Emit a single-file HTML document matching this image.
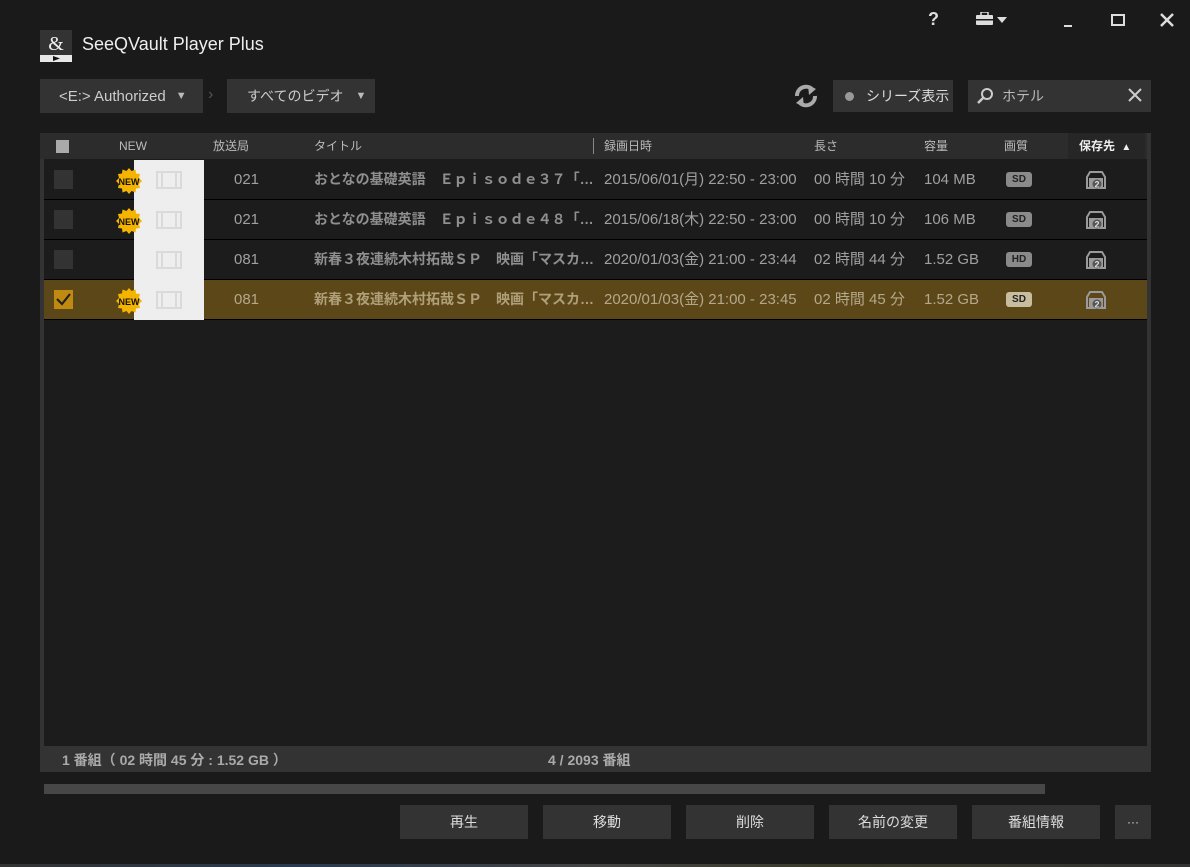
<!DOCTYPE html>
<html><head><meta charset="utf-8">
<style>
*{margin:0;padding:0;box-sizing:border-box}
body{width:1190px;height:867px;background:#1a1a1a;position:relative;overflow:hidden;font-family:"Liberation Sans","Noto Sans CJK JP",sans-serif;color:#ccc}
.abs{position:absolute}
.btn{position:absolute;background:#333;color:#ddd;font-size:14px;display:flex;align-items:center;justify-content:center}
.hdr{position:absolute;top:133px;height:26px;font-size:12px;color:#bbb;line-height:26px}
.row{position:absolute;left:44px;width:1103px;height:40px;background:#1c1c1c;border-bottom:1px solid #000}
.row .c{position:absolute;top:0;line-height:39px;font-size:15px;color:#a0a0a0;white-space:nowrap}
.cb{position:absolute;left:10px;top:10px;width:19px;height:19px;background:#333}
.new{position:absolute;left:73px;top:8px;width:26px;height:26px}
.thumb{position:absolute;left:90px;top:0;width:70px;height:40px;background:#eeeeee}
.q{position:absolute;left:962px;top:12px;width:26px;height:15px;border-radius:3px;background:#8a8a8a;color:#222;font-size:10px;font-weight:bold;text-align:center;line-height:15px}
.t{font-weight:bold;color:#8f8f8f!important;font-size:14px!important;width:280px;overflow:hidden;text-overflow:ellipsis}
</style></head><body>
<div class="abs" style="left:40px;top:30px;width:32px;height:32px;background:#333"></div>
<div class="abs" style="left:40px;top:55px;width:32px;height:7px;background:#e8e8e8"></div>
<svg class="abs" style="left:40px;top:30px" width="32" height="32"><text x="16" y="20" fill="#eee" font-size="20" text-anchor="middle" font-family="Liberation Serif">&amp;</text><path d="M13 56 L20 58.5 L13 61Z" transform="translate(0,-30)" fill="#111"/></svg>
<div class="abs" style="left:82px;top:34px;font-size:18px;color:#eee">SeeQVault Player Plus</div>
<div class="abs" style="left:928px;top:9px;font-size:18px;font-weight:bold;color:#ddd">?</div>
<svg class="abs" style="left:976px;top:12px" width="34" height="14"><rect x="0" y="3" width="17" height="10" rx="1" fill="#ddd"/><rect x="5" y="0" width="7" height="4" fill="none" stroke="#ddd" stroke-width="1.5"/><rect x="0" y="7" width="17" height="1.5" fill="#1a1a1a"/><path d="M21 5 L31 5 L26 11Z" fill="#ddd"/></svg>
<div class="abs" style="left:1064px;top:25px;width:8px;height:2px;background:#ddd"></div>
<div class="abs" style="left:1111px;top:14px;width:14px;height:12px;border:2px solid #ddd"></div>
<svg class="abs" style="left:1160px;top:13px" width="14" height="14"><path d="M1 1L13 13M13 1L1 13" stroke="#ddd" stroke-width="2.5"/></svg>
<div class="btn" style="left:40px;top:79px;width:163px;height:34px;justify-content:flex-start;padding-left:19px;color:#ccc;font-size:15px">&lt;E:&gt; Authorized<span style="margin-left:10px;font-size:11px;color:#bbb">▼</span></div>
<div class="abs" style="left:208px;top:86px;color:#555;font-size:16px">›</div>
<div class="btn" style="left:227px;top:79px;width:148px;height:34px;justify-content:flex-start;padding-left:20px;color:#ccc;font-size:14px">すべてのビデオ<span style="margin-left:12px;font-size:11px;color:#bbb">▼</span></div>
<svg class="abs" style="left:792px;top:84px" width="28" height="24"><path d="M5 12 A9 9 0 0 1 20 5" stroke="#aaa" stroke-width="4" fill="none"/><path d="M16 1 L24 5 L17 11Z" fill="#aaa"/><path d="M23 12 A9 9 0 0 1 8 19" stroke="#aaa" stroke-width="4" fill="none"/><path d="M12 23 L4 19 L11 13Z" fill="#aaa"/></svg>
<div class="btn" style="left:833px;top:80px;width:120px;height:32px;justify-content:flex-start;padding-left:12px;font-size:14px"><span style="display:inline-block;width:9px;height:9px;border-radius:50%;background:#999;margin-right:12px"></span>シリーズ表示</div>
<div class="btn" style="left:968px;top:80px;width:183px;height:32px;justify-content:flex-start;padding-left:8px;font-size:14px;color:#bbb"><svg width="18" height="18" style="margin-right:8px"><circle cx="11" cy="7" r="5" stroke="#ccc" stroke-width="2" fill="none"/><path d="M7 11L2 16" stroke="#ccc" stroke-width="2.5"/></svg>ホテル</div>
<svg class="abs" style="left:1128px;top:88px" width="14" height="14"><path d="M1 1L13 13M13 1L1 13" stroke="#ccc" stroke-width="2"/></svg>
<div class="abs" style="left:40px;top:133px;width:1111px;height:639px;background:#333"></div>
<div class="abs" style="left:40px;top:133px;width:1107px;height:26px;background:#2c2c2c"></div>
<div class="abs" style="left:1068px;top:133px;width:77px;height:26px;background:#262626"></div>
<div class="abs" style="left:44px;top:159px;width:1103px;height:587px;background:#1c1c1c"></div>
<div class="abs" style="left:56px;top:140px;width:13px;height:13px;background:#aaa"></div>
<div class="hdr" style="left:119px">NEW</div>
<div class="hdr" style="left:213px">放送局</div>
<div class="hdr" style="left:314px">タイトル</div>
<div class="abs" style="left:593px;top:138px;width:1px;height:16px;background:#888"></div>
<div class="hdr" style="left:604px">録画日時</div>
<div class="hdr" style="left:814px">長さ</div>
<div class="hdr" style="left:924px">容量</div>
<div class="hdr" style="left:1004px">画質</div>
<div class="hdr" style="left:1079px;color:#eee;font-weight:bold">保存先 <span style="font-size:10px;margin-left:3px">▲</span></div>

<svg width="0" height="0" style="position:absolute"><defs>
<g id="nw"><path d="M13 0 L15.5 3 L19.5 1.5 L20 5.5 L24 6 L23 10 L26 13 L23 16 L24 20 L20 20.5 L19.5 24.5 L15.5 23 L13 26 L10.5 23 L6.5 24.5 L6 20.5 L2 20 L3 16 L0 13 L3 10 L2 6 L6 5.5 L6.5 1.5 L10.5 3Z" fill="#f5b400"/><text x="13" y="17" font-size="9" font-weight="bold" text-anchor="middle" fill="#111" font-family="Liberation Sans">NEW</text></g>
<g id="film"><rect x="0" y="0" width="24" height="16" fill="none" stroke="#dadada" stroke-width="2"/><rect x="5" y="0" width="14" height="16" fill="none" stroke="#dadada" stroke-width="2"/></g>
<g id="hdd"><path d="M4 2 H16 L19 7 V18 H1 V7Z" fill="none" stroke="#9a9a9a" stroke-width="2"/><path d="M3 8 H17 V17 H3Z" fill="#9a9a9a"/><circle cx="11" cy="14" r="4.5" fill="#555"/><text x="11" y="17.5" font-size="9" font-weight="bold" text-anchor="middle" fill="#ddd" font-family="Liberation Sans">2</text></g>
</defs></svg>

<div class="row" style="top:160px">
<div class="cb"></div><div class="thumb"></div><svg class="new" style="left:72px"><use href="#nw"/></svg>
<svg class="abs" style="left:112px;top:11px" width="28" height="20"><use href="#film" x="1" y="1"/></svg>
<div class="c" style="left:190px">021</div>
<div class="c t" style="left:270px">おとなの基礎英語　Ｅｐｉｓｏｄｅ３７「ホテル」</div>
<div class="c" style="left:560px">2015/06/01(月) 22:50 - 23:00</div>
<div class="c" style="left:770px">00 時間 10 分</div>
<div class="c" style="left:880px">104 MB</div>
<div class="q">SD</div>
<svg class="abs" style="left:1042px;top:10px" width="20" height="20"><use href="#hdd"/></svg>
</div>
<div class="row" style="top:200px">
<div class="cb"></div><div class="thumb"></div><svg class="new" style="left:72px"><use href="#nw"/></svg>
<svg class="abs" style="left:112px;top:11px" width="28" height="20"><use href="#film" x="1" y="1"/></svg>
<div class="c" style="left:190px">021</div>
<div class="c t" style="left:270px">おとなの基礎英語　Ｅｐｉｓｏｄｅ４８「ホテル」</div>
<div class="c" style="left:560px">2015/06/18(木) 22:50 - 23:00</div>
<div class="c" style="left:770px">00 時間 10 分</div>
<div class="c" style="left:880px">106 MB</div>
<div class="q">SD</div>
<svg class="abs" style="left:1042px;top:10px" width="20" height="20"><use href="#hdd"/></svg>
</div>
<div class="row" style="top:240px">
<div class="cb"></div><div class="thumb"></div>
<svg class="abs" style="left:112px;top:11px" width="28" height="20"><use href="#film" x="1" y="1"/></svg>
<div class="c" style="left:190px">081</div>
<div class="c t" style="left:270px">新春３夜連続木村拓哉ＳＰ　映画「マスカレード・ホテル」</div>
<div class="c" style="left:560px">2020/01/03(金) 21:00 - 23:44</div>
<div class="c" style="left:770px">02 時間 44 分</div>
<div class="c" style="left:880px">1.52 GB</div>
<div class="q">HD</div>
<svg class="abs" style="left:1042px;top:10px" width="20" height="20"><use href="#hdd"/></svg>
</div>
<div class="row" style="top:280px;background:#5c4718">
<div class="cb" style="background:#c08a10"><svg width="19" height="19"><path d="M3 9 L8 14 L16 4" stroke="#222" stroke-width="2.2" fill="none"/></svg></div><div class="thumb"></div><svg class="new" style="left:72px"><use href="#nw"/></svg>
<svg class="abs" style="left:112px;top:11px" width="28" height="20"><use href="#film" x="1" y="1"/></svg>
<div class="c" style="left:190px;color:#b5a88a">081</div>
<div class="c t" style="left:270px;color:#b0a07a!important">新春３夜連続木村拓哉ＳＰ　映画「マスカレード・ホテル」</div>
<div class="c" style="left:560px;color:#b5a88a">2020/01/03(金) 21:00 - 23:45</div>
<div class="c" style="left:770px;color:#b5a88a">02 時間 45 分</div>
<div class="c" style="left:880px;color:#b5a88a">1.52 GB</div>
<div class="q" style="background:#c9bd9f">SD</div>
<svg class="abs" style="left:1042px;top:10px" width="20" height="20"><use href="#hdd"/></svg>
</div>
<div class="abs" style="left:62px;top:750px;font-size:14px;font-weight:bold;color:#aaa">1 番組（ 02 時間 45 分 : 1.52 GB ）</div>
<div class="abs" style="left:548px;top:750px;font-size:14px;font-weight:bold;color:#aaa">4 / 2093 番組</div>
<div class="abs" style="left:44px;top:784px;width:1001px;height:10px;background:#474747"></div>
<div class="btn" style="left:400px;top:805px;width:128px;height:34px">再生</div>
<div class="btn" style="left:543px;top:805px;width:128px;height:34px">移動</div>
<div class="btn" style="left:686px;top:805px;width:128px;height:34px">削除</div>
<div class="btn" style="left:829px;top:805px;width:128px;height:34px">名前の変更</div>
<div class="btn" style="left:972px;top:805px;width:128px;height:34px">番組情報</div>
<div class="btn" style="left:1115px;top:805px;width:36px;height:34px;font-size:12px">···</div>
<div class="abs" style="left:0;top:864px;width:1190px;height:3px;background:linear-gradient(90deg,#333,#2a3a50 25%,#444 50%,#3a3a2a 70%,#333)"></div>
</body></html>
